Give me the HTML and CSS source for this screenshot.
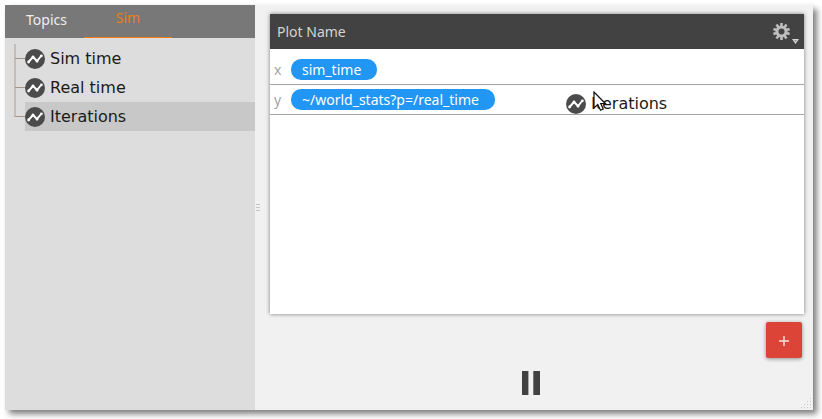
FILE: index.html
```html
<!DOCTYPE html>
<html lang="en">
<head>
<meta charset="utf-8">
<title>Plot</title>
<link rel="stylesheet" href="styles.css">
</head>
<body>
<svg class="defs" aria-hidden="true">
  <symbol id="series" viewBox="0 0 20 20">
    <circle cx="10" cy="10" r="10" fill="#4b4b4b"/>
    <path d="M3.5 13 8 8l4 4 4.500-5.500" fill="none" stroke="#fff" stroke-width="1.900"/>
    <g fill="#fff"><circle cx="3.600" cy="13" r="1.400"/><circle cx="8" cy="8" r="1.500"/><circle cx="12" cy="12" r="1.500"/><circle cx="16.400" cy="6.800" r="1.400"/></g>
  </symbol>
</svg>
<div class="window">
  <aside class="sidebar">
    <nav class="tabs">
      <button class="tab" type="button">Topics</button>
      <button class="tab tab-active" type="button">Sim</button>
    </nav>
    <ul class="tree">
      <li class="item"><svg class="icon"><use href="#series"/></svg>Sim time</li>
      <li class="item"><svg class="icon"><use href="#series"/></svg>Real time</li>
      <li class="item item-selected"><svg class="icon"><use href="#series"/></svg>Iterations</li>
    </ul>
  </aside>
  <div class="splitter"><i></i><i></i><i></i></div>
  <main class="main">
    <section class="plot">
      <header class="plot-header">
        <h1 class="plot-name">Plot Name</h1>
        <button class="settings" type="button" aria-label="Plot settings">
          <svg width="26" height="24" viewBox="0 0 26 24">
            <g fill="none" stroke="#bdbdbd">
              <circle cx="8.500" cy="11.500" r="4.600" stroke-width="3"/>
              <path d="M8.500 3v17M3.500 4.600l10 13.800M.4 8.900l16.200 5.200M.4 14.100l16.200-5.200M3.500 18.400l10-13.800" stroke-width="2.600"/>
            </g>
            <circle cx="8.500" cy="11.500" r="3" fill="#424242"/>
            <path d="M19 19h7l-3.500 5z" fill="#d8d8d8"/>
            <path d="M21 20h3l-1.500 2z" fill="#999"/>
          </svg>
        </button>
      </header>
      <div class="axis"><span class="axis-name">x</span><span class="pill">sim_time</span></div>
      <div class="axis"><span class="axis-name">y</span><span class="pill">~/world_stats?p=/real_time</span></div>
    </section>
    <button class="add" type="button" aria-label="Add plot"><svg width="10" height="12" viewBox="0 0 10 12"><path d="M5 2v10M0 7h10" stroke="#fff" stroke-opacity=".85" stroke-width="1.400"/></svg></button>
    <div class="player">
      <button class="pause" type="button" aria-label="Pause"><svg width="18" height="24"><path d="M0 0h6v24H0zM12 0h6v24h-6z" fill="#424242"/><path d="M6 0h1v24H6z" fill="#aaa"/><path d="M11 0h1v24h-1z" fill="#777"/></svg></button>
    </div>
  </main>
  <svg class="grip" width="11" height="11" viewBox="0 0 11 11"><path d="M9 0h1v1H9zM6 3h1v1H6zM9 3h1v1H9zM3 6h1v1H3zM6 6h1v1H6zM9 6h1v1H9zM0 9h1v1H0zM3 9h1v1H3zM6 9h1v1H6zM9 9h1v1H9z" fill="#c8c8c8"/></svg>
</div>
<div class="drag">
  <svg class="icon"><use href="#series"/></svg>Iterations
  <svg class="cursor" width="14" height="21" viewBox="0 0 14 21"><path d="M1 1v16l3.800-3.500 2.700 5.700 2.800-1.300-2.600-5.400h4.600z" fill="#fff" stroke="#111" stroke-width="1.200"/></svg>
</div>
</body>
</html>
```
FILE: styles.css
```css
* { box-sizing: border-box; }
body {
  margin: 0;
  background: #fff;
  font: 14px/20px "Noto Sans", sans-serif;
}
button { border: 0; padding: 0; font: inherit; cursor: pointer; }
svg { display: block; }
.defs { position: absolute; width: 0; height: 0; }
.window {
  position: relative;
  display: flex;
  min-height: calc(100vh - 14px);
  margin: 5px 9px 9px 5px;
  background: #f1f1f1;
  box-shadow: 4px 4px 6px rgba(0, 0, 0, .5);
}
.sidebar { flex: 0 0 250px; background: #ddd; }
.tabs { display: flex; height: 33px; background: #787878; }
.tab {
  width: 88px;
  padding-bottom: 4px;
  background: none;
  color: #eee;
}
.tab:first-child { width: 79px; padding: 0 0 4px 4px; }
.tab-active {
  padding-bottom: 6px;
  border-bottom: 1px solid #f58113;
  color: #e8801a;
}
.tree {
  position: relative;
  margin: 0;
  padding: 6px 0 0 20px;
  list-style: none;
}
.tree::before {
  content: "";
  position: absolute;
  left: 9px;
  top: 6px;
  bottom: 14px;
  width: 2px;
  background: #c3beb9;
}
.item, .drag {
  display: flex;
  align-items: center;
  gap: 5px;
  color: #1a1a1a;
  font: 16px/20px "DejaVu Sans", sans-serif;
}
.item { position: relative; height: 29px; }
.item::before {
  content: "";
  position: absolute;
  left: -10px;
  top: 14px;
  width: 10px;
  height: 1px;
  background: #a09890;
}
.item-selected { background: #c8c8c8; }
.icon { width: 20px; height: 20px; flex: none; }
.splitter {
  flex: 0 0 15px;
  display: flex;
  flex-direction: column;
  justify-content: center;
  gap: 2px;
  padding-left: 1px;
}
.splitter i { width: 4px; height: 1px; background: #c4c4c4; }
.main {
  flex: 1;
  min-width: 0;
  display: flex;
  flex-direction: column;
  padding: 9px 9px 15px 0;
}
.plot {
  flex: 1;
  background: #fff;
  box-shadow: 0 0 4px rgba(0, 0, 0, .5);
}
.plot-header {
  display: flex;
  align-items: center;
  justify-content: space-between;
  height: 35px;
  margin-bottom: 6px;
  padding: 0 5px 0 7px;
  background: #424242;
}
.plot-name { margin: 0; color: #d4d4d4; font: inherit; }
.settings { background: none; }
.axis {
  display: flex;
  align-items: center;
  height: 30px;
  padding-left: 4px;
  border-bottom: 1px solid #a5a5a5;
}
.axis-name { width: 17px; color: #a5a5a5; }
.pill {
  height: 21px;
  padding: 1px 16px 0 11px;
  border-radius: 10px;
  background: #2196f3;
  color: #fff;
}
.add {
  display: grid;
  place-items: center;
  align-self: flex-end;
  width: 36px;
  height: 36px;
  margin: 8px 2px 13px 0;
  border-radius: 2px;
  background: #db4437;
  box-shadow: 0 1px 4px rgba(0, 0, 0, .4);
}
.player { display: flex; justify-content: center; padding-right: 12px; }
.pause { background: none; }
.grip { position: absolute; right: 1px; bottom: 1px; }
.drag { position: absolute; left: 566px; top: 94px; }
.cursor { position: absolute; left: 27px; top: -3px; }
```
